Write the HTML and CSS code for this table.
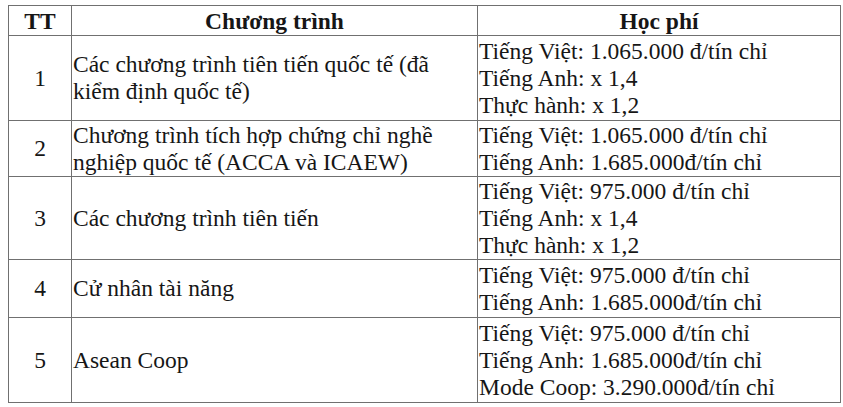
FILE: index.html
```html
<!DOCTYPE html>
<html lang="vi">
<head>
<meta charset="utf-8">
<link rel="stylesheet" href="styles.css">
</head>
<body>
<table class="fees">
  <colgroup>
    <col class="c-tt">
    <col class="c-prog">
    <col class="c-fee">
  </colgroup>
  <thead>
    <tr class="head">
      <th>TT</th>
      <th>Chương trình</th>
      <th>Học phí</th>
    </tr>
  </thead>
  <tbody>
    <tr class="row-1">
      <td class="num">1</td>
      <td class="prog">Các chương trình tiên tiến quốc tế (đã kiểm định quốc tế)</td>
      <td class="fee">Tiếng Việt: 1.065.000 đ/tín chỉ<br>Tiếng Anh: x 1,4<br>Thực hành: x 1,2</td>
    </tr>
    <tr class="row-2">
      <td class="num">2</td>
      <td class="prog">Chương trình tích hợp chứng chỉ nghề nghiệp quốc tế (ACCA và ICAEW)</td>
      <td class="fee">Tiếng Việt: 1.065.000 đ/tín chỉ<br>Tiếng Anh: 1.685.000đ/tín chỉ</td>
    </tr>
    <tr class="row-3">
      <td class="num">3</td>
      <td class="prog">Các chương trình tiên tiến</td>
      <td class="fee">Tiếng Việt: 975.000 đ/tín chỉ<br>Tiếng Anh: x 1,4<br>Thực hành: x 1,2</td>
    </tr>
    <tr class="row-4">
      <td class="num">4</td>
      <td class="prog">Cử nhân tài năng</td>
      <td class="fee">Tiếng Việt: 975.000 đ/tín chỉ<br>Tiếng Anh: 1.685.000đ/tín chỉ</td>
    </tr>
    <tr class="row-5">
      <td class="num">5</td>
      <td class="prog">Asean Coop</td>
      <td class="fee">Tiếng Việt: 975.000 đ/tín chỉ<br>Tiếng Anh: 1.685.000đ/tín chỉ<br>Mode Coop: 3.290.000đ/tín chỉ</td>
    </tr>
  </tbody>
</table>
</body>
</html>
```
FILE: styles.css
```css
html, body {
  margin: 0;
  padding: 0;
  background: #fff;
}
body {
  padding: 5px 0 0 8px;
  font-family: "Liberation Serif", "Times New Roman", serif;
  color: #161616;
}
.fees {
  border-collapse: collapse;
  table-layout: fixed;
  width: 832px;
  font-size: 23.5px;
}
.c-tt { width: 63px; }
.c-prog { width: 406px; }
.c-fee { width: 363px; }
.fees th,
.fees td {
  border: 1px solid #707070;
  padding: 0 1px;
  vertical-align: middle;
}
.fees th {
  font-weight: bold;
  text-align: center;
  height: 29px;
  line-height: 26px;
}
.fees td {
  line-height: 27px;
}
.row-1 td { height: 84px; }
.row-2 td { height: 55px; }
.row-3 td { height: 82px; }
.row-4 td { height: 57px; }
.row-5 td { height: 84px; }
.num { text-align: center; }
.prog { text-align: left; }
.fee { text-align: left; white-space: nowrap; padding-left: 2px; }
```
